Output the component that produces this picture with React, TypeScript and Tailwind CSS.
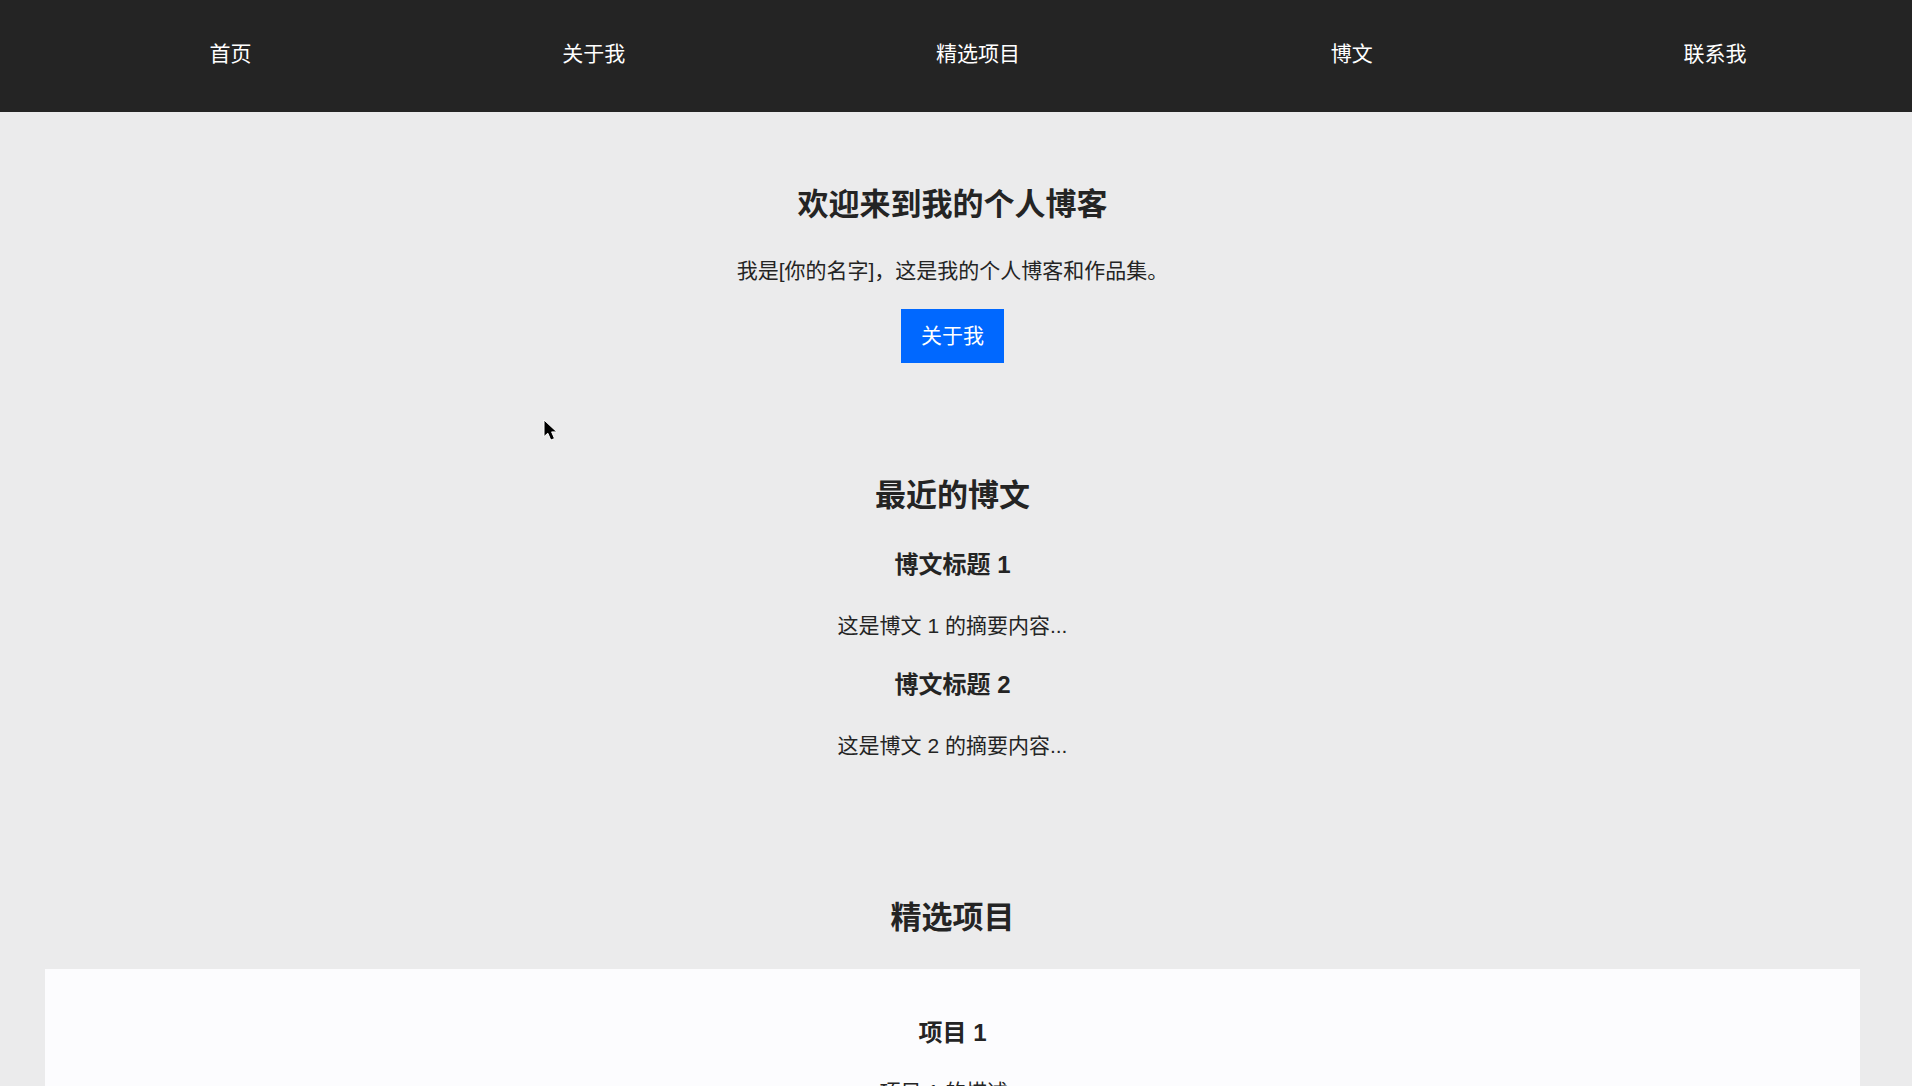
const navLinks = [
  { label: "首页", href: "#home" },
  { label: "关于我", href: "#about" },
  { label: "精选项目", href: "#projects" },
  { label: "博文", href: "#posts" },
  { label: "联系我", href: "#contact" },
]

const posts = [
  { title: "博文标题 1", summary: "这是博文 1 的摘要内容..." },
  { title: "博文标题 2", summary: "这是博文 2 的摘要内容..." },
]

const projects = [{ title: "项目 1", description: "项目 1 的描述..." }]

function SectionTitle({ children }: { children: string }) {
  return <h2 className="mb-7 text-[31px] leading-[46px] font-bold">{children}</h2>
}

function Header() {
  return (
    <header className="bg-[#242424] pt-[39px] pr-[10px] pb-[43px] pl-[54px] text-white">
      <nav>
        <ul className="flex justify-around">
          {navLinks.map((link) => (
            <li key={link.href}>
              <a href={link.href} className="block leading-[30px]">
                {link.label}
              </a>
            </li>
          ))}
        </ul>
      </nav>
    </header>
  )
}

// Mouse pointer resting over the page
function Pointer() {
  return (
    <svg
      className="pointer-events-none absolute top-[419px] left-[543px] h-[24px] w-[16px]"
      viewBox="0 0 16 24"
      aria-hidden="true"
    >
      <path
        d="M1 1v16.6l3.8-3.4 3 6.9 3.7-1.6-2.9-6.6h5.2z"
        fill="#000"
        stroke="#fff"
        strokeWidth="1"
      />
    </svg>
  )
}

export default function App() {
  return (
    <div
      lang="zh-CN"
      className="relative h-screen overflow-y-auto bg-[#ebebec] font-['Liberation_Sans','Noto_Sans_CJK_SC',sans-serif] text-[21px] leading-[30px] text-[#242424] [scrollbar-width:none]"
    >
      <Header />

      <main className="pr-[7px] text-center">
        <section id="home" className="px-11 pt-[70px] pb-[54px]">
          <SectionTitle>欢迎来到我的个人博客</SectionTitle>
          <p className="mb-[23px]">我是[你的名字]，这是我的个人博客和作品集。</p>
          <a
            href="#about"
            className="inline-block bg-[#0068ff] px-5 py-3 align-top text-white"
          >
            关于我
          </a>
        </section>

        <section id="posts" className="px-11 pt-14 pb-[54px]">
          <SectionTitle>最近的博文</SectionTitle>
          {posts.map((post) => (
            <article key={post.title} className="mb-[26px]">
              <h3 className="mb-7 text-2xl leading-9 font-bold">{post.title}</h3>
              <p>{post.summary}</p>
            </article>
          ))}
        </section>

        <section id="projects" className="px-[45px] pt-[54px] pb-14">
          <SectionTitle>精选项目</SectionTitle>
          {projects.map((project) => (
            <article key={project.title} className="bg-[#fcfcfe] px-7 py-[46px]">
              <h3 className="mb-[26px] text-2xl leading-9 font-bold">{project.title}</h3>
              <p>{project.description}</p>
            </article>
          ))}
        </section>
      </main>

      <Pointer />
    </div>
  )
}
